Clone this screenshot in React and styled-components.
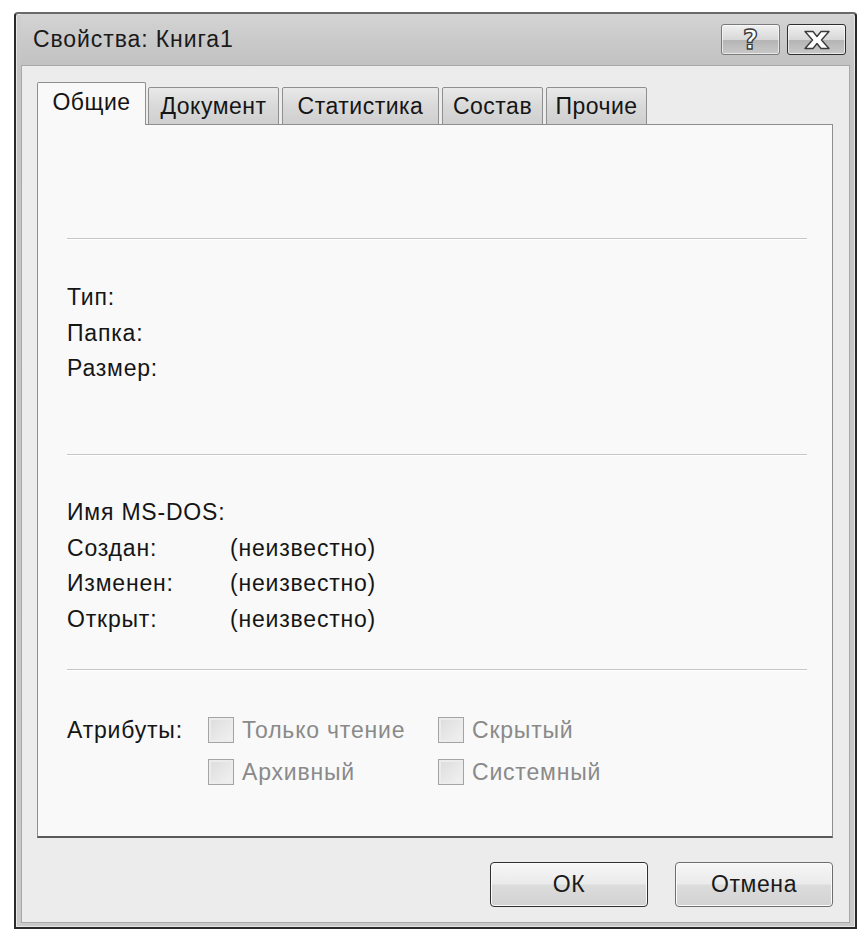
import React from 'react';
import styled, { createGlobalStyle } from 'styled-components';

const GlobalStyle = createGlobalStyle`
    html, body {
        margin: 0;
        padding: 0;
        background: #ffffff;
    }
    body {
        font-family: "Liberation Sans", Arial, sans-serif;
        color: #151515;
    }
`;

const Page = styled.div`
    width: 868px;
    height: 940px;
    padding: 12px 0 0 14px;
    box-sizing: border-box;
`;

const Window = styled.div`
    width: 843px;
    height: 917px;
    box-sizing: border-box;
    border: 2px solid #2a2a2a;
    border-top-color: #6a6a6a;
    border-radius: 4px 4px 0 0;
    background: linear-gradient(#cfcfcf, #c4c4c4 60px, #c9c9c9);
    padding: 0 5px 4px 5px;
    display: flex;
    flex-direction: column;
    box-shadow: inset 0 0 0 1px #e6e6e6;
`;

const TitleBar = styled.div`
    height: 51px;
    display: flex;
    align-items: center;
    justify-content: space-between;
    padding: 0 4px 0 12px;
    background: linear-gradient(#d4d4d4, #cacaca 50%, #c2c2c2);
`;

const Title = styled.div`
    font-size: 23px;
    color: #1a1a1a;
    letter-spacing: 0.9px;
`;

const Controls = styled.div`
    display: flex;
    gap: 7px;
    margin-top: 0;
`;

const CaptionButton = styled.div`
    width: 59px;
    height: 31px;
    box-sizing: border-box;
    border: 1px solid ${(p) => (p.$dark ? '#2e2e2e' : '#7a7a7a')};
    border-radius: 3px;
    background: linear-gradient(#f0f0f0, #d8d8d8 50%, #b4b4b4 51%, #c8c8c8);
    display: flex;
    align-items: center;
    justify-content: center;
    box-shadow: inset 0 0 0 1px rgba(255, 255, 255, 0.6);
`;

const HelpGlyph = styled.span`
    font-family: "DejaVu Sans", sans-serif;
    font-weight: bold;
    font-size: 26px;
    color: #ffffff;
    -webkit-text-stroke: 1.4px #3c3c3c;
    line-height: 1;
`;

const Client = styled.div`
    flex: 1;
    background: #ececec;
    border: 1px solid #a8a8a8;
    display: flex;
    flex-direction: column;
    padding: 17px 16px 0 15px;
`;

const TabStrip = styled.div`
    display: flex;
    align-items: flex-end;
    height: 42px;
    position: relative;
    z-index: 1;
    margin-bottom: -1px;
`;

const Tab = styled.div`
    width: ${(p) => p.$w}px;
    height: ${(p) => (p.$active ? 43 : 38)}px;
    box-sizing: border-box;
    margin-right: ${(p) => (p.$active ? 2 : 3)}px;
    border: 1px solid #8f8f8f;
    border-bottom: ${(p) => (p.$active ? 'none' : '1px solid #8f8f8f')};
    background: ${(p) =>
        p.$active ? '#f9f9f9' : 'linear-gradient(#e9e9e9, #d9d9d9 50%, #cfcfcf)'};
    display: flex;
    align-items: center;
    justify-content: center;
    font-size: 23px;
    letter-spacing: 0.5px;
    white-space: nowrap;
    padding-bottom: ${(p) => (p.$active ? 4 : 0)}px;
    border-radius: 2px 2px 0 0;
`;

const Panel = styled.div`
    height: 714px;
    box-sizing: border-box;
    background: #f9f9f9;
    border: 1px solid #8e8e8e;
    border-bottom: 2px solid #5a5a5a;
    padding: 0 25px 0 29px;
`;

const Blank = styled.div`
    height: 113px;
`;

const Separator = styled.div`
    height: 1px;
    background: #c6c6c6;
    border-bottom: 1px solid #ffffff;
`;

const Section = styled.div`
    height: ${(p) => p.$h}px;
    padding-top: ${(p) => p.$top}px;
    box-sizing: border-box;
`;

const InfoGrid = styled.div`
    display: grid;
    grid-template-columns: 163px 1fr;
    grid-auto-rows: 35.5px;
    align-items: center;
    font-size: 23px;
    letter-spacing: 0.8px;
`;

const AttrGrid = styled.div`
    display: grid;
    grid-template-columns: 141px 230px 1fr;
    grid-auto-rows: 42px;
    align-items: center;
    font-size: 23px;
    letter-spacing: 0.8px;
`;

const CheckRow = styled.label`
    display: flex;
    align-items: center;
    gap: 8px;
    color: #8a8a8a;
`;

const Box = styled.span`
    width: 26px;
    height: 26px;
    box-sizing: border-box;
    border: 1px solid #a4a4a4;
    background: linear-gradient(135deg, #dcdcdc, #f2f2f2);
    box-shadow: inset 0 0 0 2px #ececec;
`;

const ButtonRow = styled.div`
    flex: 1;
    display: flex;
    justify-content: flex-end;
    align-items: flex-start;
    gap: 27px;
    padding-top: 24px;
`;

const PushButton = styled.div`
    width: 158px;
    height: 45px;
    box-sizing: border-box;
    border: 1px solid ${(p) => (p.$default ? '#2f2f2f' : '#6e6e6e')};
    border-radius: 4px;
    background: linear-gradient(#f6f6f6, #ebebeb 48%, #dcdcdc 52%, #d2d2d2);
    box-shadow: inset 0 0 0 1px #fbfbfb;
    display: flex;
    align-items: center;
    justify-content: center;
    font-size: 23px;
    letter-spacing: 0.6px;
    color: #1a1a1a;
`;

const tabs = [
    { name: 'Общие', w: 109 },
    { name: 'Документ', w: 131 },
    { name: 'Статистика', w: 157 },
    { name: 'Состав', w: 101 },
    { name: 'Прочие', w: 101 },
];

const CloseIcon = () => (
    <svg width="32" height="22" viewBox="0 0 32 22">
        <path
            d="M4 2.5 L12 2.5 L16 7.5 L20 2.5 L28 2.5 L20.5 11 L28 19.5 L20 19.5 L16 14.5 L12 19.5 L4 19.5 L11.5 11 Z"
            fill="#ffffff"
            stroke="#3a3a3a"
            strokeWidth="1.4"
            strokeLinejoin="round"
        />
    </svg>
);

const Checkbox = ({ label }) => (
    <CheckRow>
        <Box />
        {label}
    </CheckRow>
);

const App = () => {
    return (
        <Page>
            <GlobalStyle />
            <Window>
                <TitleBar>
                    <Title>Свойства: Книга1</Title>
                    <Controls>
                        <CaptionButton>
                            <HelpGlyph>?</HelpGlyph>
                        </CaptionButton>
                        <CaptionButton $dark>
                            <CloseIcon />
                        </CaptionButton>
                    </Controls>
                </TitleBar>
                <Client>
                    <TabStrip>
                        {tabs.map((t, i) => (
                            <Tab key={t.name} $w={t.w} $active={i === 0}>
                                {t.name}
                            </Tab>
                        ))}
                    </TabStrip>
                    <Panel>
                        <Blank />
                        <Separator />
                        <Section $h={214} $top={40}>
                            <InfoGrid>
                                <span>Тип:</span>
                                <span />
                                <span>Папка:</span>
                                <span />
                                <span>Размер:</span>
                                <span />
                            </InfoGrid>
                        </Section>
                        <Separator />
                        <Section $h={213} $top={39}>
                            <InfoGrid>
                                <span>Имя MS-DOS:</span>
                                <span />
                                <span>Создан:</span>
                                <span>(неизвестно)</span>
                                <span>Изменен:</span>
                                <span>(неизвестно)</span>
                                <span>Открыт:</span>
                                <span>(неизвестно)</span>
                            </InfoGrid>
                        </Section>
                        <Separator />
                        <Section $h={160} $top={38}>
                            <AttrGrid>
                                <span>Атрибуты:</span>
                                <Checkbox label="Только чтение" />
                                <Checkbox label="Скрытый" />
                                <span />
                                <Checkbox label="Архивный" />
                                <Checkbox label="Системный" />
                            </AttrGrid>
                        </Section>
                    </Panel>
                    <ButtonRow>
                        <PushButton $default>ОК</PushButton>
                        <PushButton>Отмена</PushButton>
                    </ButtonRow>
                </Client>
            </Window>
        </Page>
    );
};

export default App;
